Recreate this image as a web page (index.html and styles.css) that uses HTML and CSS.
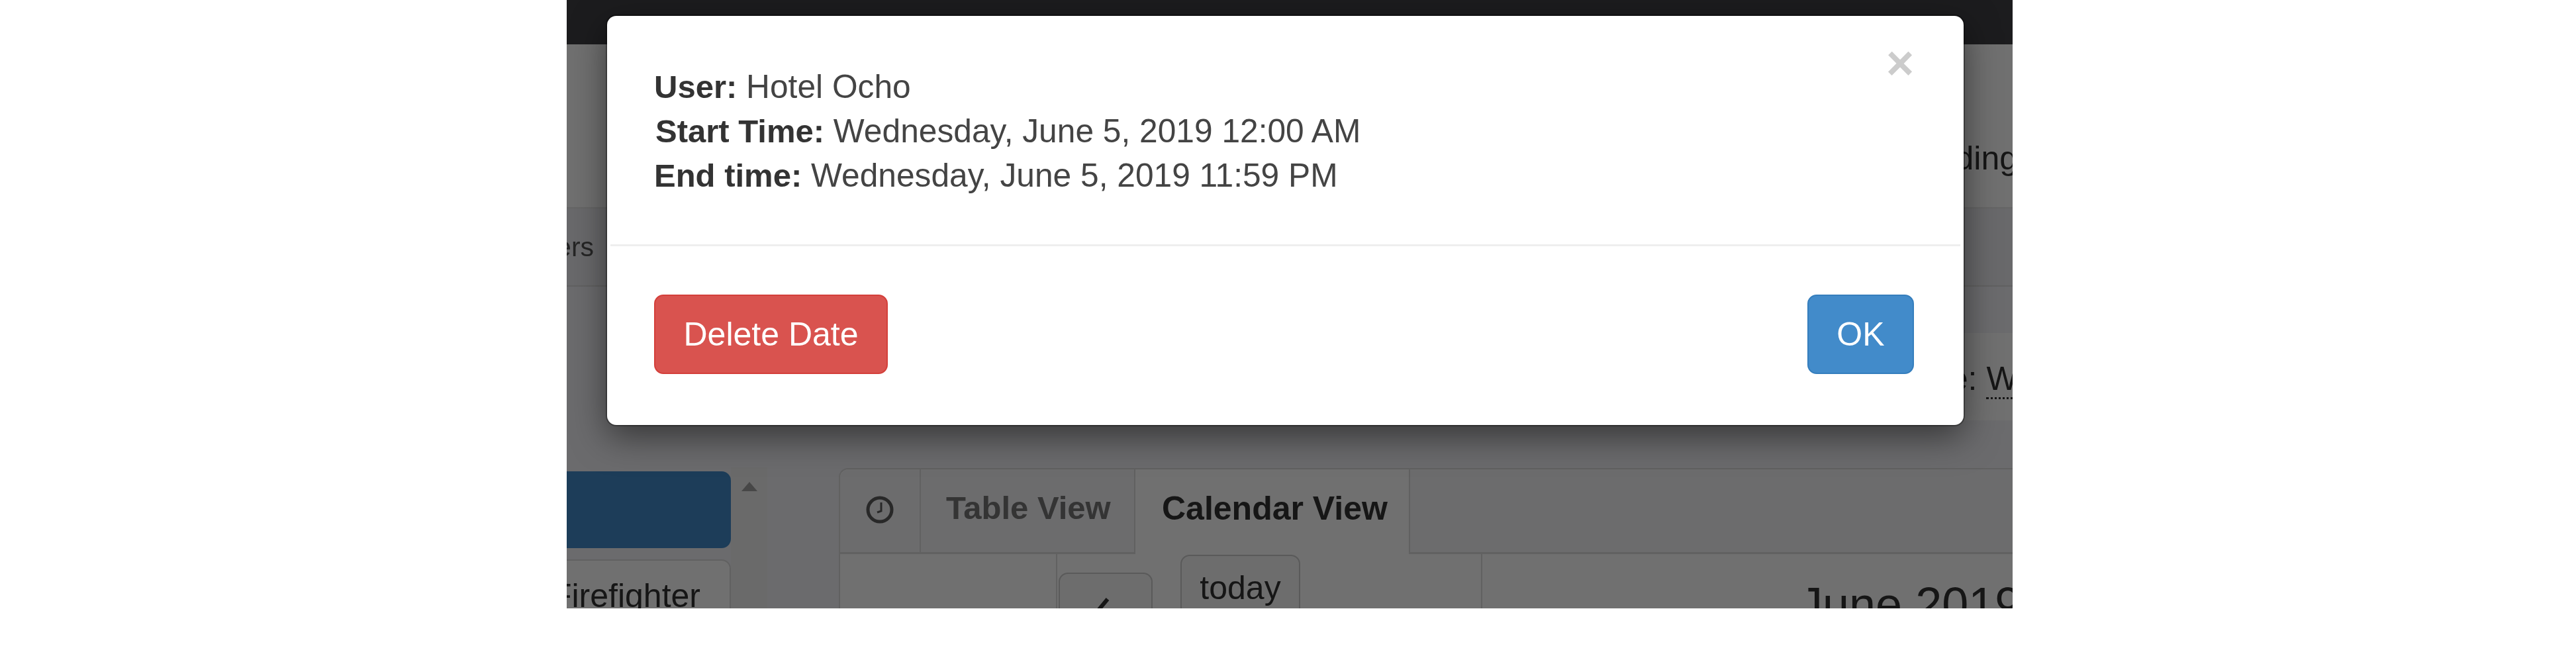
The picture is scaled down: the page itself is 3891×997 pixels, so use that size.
FILE: index.html
```html
<!DOCTYPE html>
<html>
<head>
    <title>Schedule</title>
    <link rel="stylesheet" href="styles.css">
</head>
<body>
    <div class="screen">
        <div class="topbar"></div>

        <div class="nav-row">
            <span class="nav-link">Pending</span>
        </div>

        <div class="sub-row">
            <span class="sub-link">Users</span>
        </div>

        <div class="filter-row">
            <div class="filter-card">
                <span>Date: <span class="dotted">Wednesday</span></span>
            </div>
        </div>

        <div class="main-row">
            <div class="sidebar">
                <div class="side-list">
                    <div class="side-button active"></div>
                    <div class="side-button">Firefighter</div>
                </div>
                <div class="scroll-track">
                    <div class="scroll-up"></div>
                </div>
            </div>

            <div class="tab-panel">
                <div class="tabs">
                    <div class="tab tab-icon">
                        <svg class="clock" viewBox="0 0 42 42" width="42" height="42">
                            <circle cx="21" cy="21" r="18" fill="none" stroke="#5c5c5c" stroke-width="5"/>
                            <path d="M23 10V23L17 25" fill="none" stroke="#5c5c5c" stroke-width="3"/>
                        </svg>
                    </div>
                    <div class="tab">Table View</div>
                    <div class="tab current">Calendar View</div>
                </div>
                <div class="cal-head">
                    <div class="cal-blank"></div>
                    <div class="cal-buttons">
                        <div class="cal-button prev">
                            <svg viewBox="0 0 40 60" width="40" height="60">
                                <path d="M30 6L10 30L30 54" fill="none" stroke="#333" stroke-width="6"/>
                            </svg>
                        </div>
                        <div class="cal-button today">today</div>
                    </div>
                    <div class="cal-title">June 2019</div>
                </div>
            </div>
        </div>

        <div class="backdrop"></div>

        <div class="modal">
            <div class="modal-body">
                <span class="close">&times;</span>
                <div><b>User:</b> Hotel Ocho</div>
                <div class="start-line"><b>Start Time:</b> Wednesday, June 5, 2019 12:00 AM</div>
                <div><b>End time:</b> Wednesday, June 5, 2019 11:59 PM</div>
            </div>
            <div class="modal-footer">
                <button class="btn btn-danger">Delete Date</button>
                <button class="btn btn-primary">OK</button>
            </div>
        </div>
    </div>
</body>
</html>
```

FILE: styles.css
```css
html, body {
    margin: 0;
    background: #fff;
}

body {
    font-family: "Liberation Sans", Arial, sans-serif;
    font-size: 50px;
    color: #333;
}

/* The cropped app area, everything else is white */
.screen {
    position: relative;
    width: 2184px;
    height: 919px;
    margin-left: 856px;
    overflow: hidden;
    background: #f3f3f8;
    filter: blur(0.7px);
}

.topbar {
    height: 67px;
    background: #404044;
}

.nav-row {
    height: 248px;
    box-sizing: border-box;
    display: flex;
    justify-content: flex-end;
    align-items: center;
    padding-top: 98px;
    margin-right: -8px;
    background: #fff;
    border-bottom: 2px solid #e7e7e7;
}

.sub-row {
    height: 118px;
    box-sizing: border-box;
    display: flex;
    align-items: center;
    margin-left: -66px;
    font-size: 41px;
    color: #555;
    background: #efeff3;
    border-bottom: 2px solid #ddd;
}

.filter-row {
    height: 273px;
    box-sizing: border-box;
    padding-top: 70px;
    display: flex;
    justify-content: flex-end;
}

.filter-card {
    width: 500px;
    height: 132px;
    margin-right: -20px;
    display: flex;
    align-items: center;
    overflow: hidden;
    background: #fff;
    white-space: nowrap;
    box-sizing: border-box;
}

.filter-card > span {
    margin-left: 307px;
    margin-top: 6px;
}

.dotted {
    border-bottom: 3px dotted #333;
}

.main-row {
    display: flex;
    align-items: flex-start;
}

.sidebar {
    width: 303px;
    display: flex;
    flex-shrink: 0;
}

.side-list {
    width: 248px;
    padding-top: 6px;
    display: flex;
    flex-direction: column;
    gap: 17px;
}

.side-button {
    margin-left: -40px;
    height: 116px;
    box-sizing: border-box;
    padding: 24px 44px 0 0;
    text-align: right;
    background: #fff;
    border: 2px solid #ddd;
    border-radius: 14px;
}

.side-button.active {
    background: #428bca;
    border-color: #428bca;
}

.scroll-track {
    width: 55px;
    height: 300px;
    background: #f1f1f1;
    display: flex;
    justify-content: center;
    padding-top: 22px;
    box-sizing: border-box;
}

.scroll-up {
    width: 0;
    height: 0;
    border-left: 12px solid transparent;
    border-right: 12px solid transparent;
    border-bottom: 14px solid #a3a3a3;
}

.tab-panel {
    margin-left: 108px;
    flex: 1;
    margin-top: 1px;
    background: #fff;
    border: 2px solid #ddd;
    border-right: 0;
    border-radius: 14px 0 0 0;
}

.tabs {
    display: flex;
    height: 125px;
    background: #f5f5f9;
    border-bottom: 3px solid #ddd;
    border-radius: 14px 0 0 0;
}

.tab {
    height: 125px;
    box-sizing: border-box;
    padding: 30px 0 0 38px;
    width: 324px;
    font-size: 49px;
    font-weight: bold;
    color: #777;
    border-right: 2px solid #ddd;
}

.tab-icon {
    width: 122px;
    padding: 40px 0 0;
    display: flex;
    justify-content: center;
}

.clock {
    display: block;
}

.tab.current {
    height: 128px;
    width: 415px;
    font-size: 50px;
    color: #333;
    background: #fff;
    padding: 30px 0 0 40px;
}

.cal-head {
    display: flex;
    height: 120px;
}

.cal-blank {
    width: 326px;
    border-right: 2px solid #ddd;
}

.cal-buttons {
    width: 642px;
    display: flex;
    align-items: flex-start;
    gap: 42px;
    box-sizing: border-box;
    padding-left: 2px;
    border-right: 2px solid #ddd;
}

.cal-button {
    box-sizing: border-box;
    border: 2px solid #ccc;
    border-radius: 14px;
    background: #f8f8f8;
}

.cal-button.prev {
    width: 142px;
    height: 120px;
    margin-top: 28px;
    padding: 32px 0 0 42px;
}

.cal-button.today {
    width: 181px;
    height: 120px;
    margin-top: 1px;
    text-align: center;
    padding-top: 19px;
}

.cal-title {
    flex: 1;
    padding: 35px 0 0 478px;
    font-size: 72px;
    white-space: nowrap;
}

.backdrop {
    position: absolute;
    inset: 0;
    background: rgba(0, 0, 0, 0.56);
}

.modal {
    position: absolute;
    left: 61px;
    top: 24px;
    width: 2049px;
    height: 618px;
    box-sizing: border-box;
    background: #fff;
    border-radius: 14px;
    box-shadow: 0 0 0 2px rgba(0, 0, 0, 0.3), 0 17px 52px rgba(0, 0, 0, 0.5);
    display: flex;
    flex-direction: column;
}

.modal-body {
    position: relative;
    height: 348px;
    box-sizing: border-box;
    padding: 74px 72px 0 66px;
    font-size: 49.7px;
    line-height: 67px;
    margin: 0 5px;
    border-bottom: 3px solid #eee;
    color: #444;
}

.modal-body b {
    font-size: 49px;
    color: #333;
}

.start-line {
    padding-left: 2px;
}

.close {
    position: absolute;
    top: 35px;
    right: 70px;
    font-size: 72px;
    line-height: 72px;
    font-weight: bold;
    color: #ccc;
}

.modal-footer {
    display: flex;
    justify-content: space-between;
    padding: 73px 75px 0 71px;
}

.btn {
    height: 120px;
    padding: 0 42.5px;
    font: 50px "Liberation Sans", Arial, sans-serif;
    color: #fff;
    border-radius: 14px;
    border: 2px solid;
}

.btn-danger {
    background: #d9534f;
    border-color: #d43f3a;
}

.btn-primary {
    background: #428bca;
    border-color: #357ebd;
}
```
